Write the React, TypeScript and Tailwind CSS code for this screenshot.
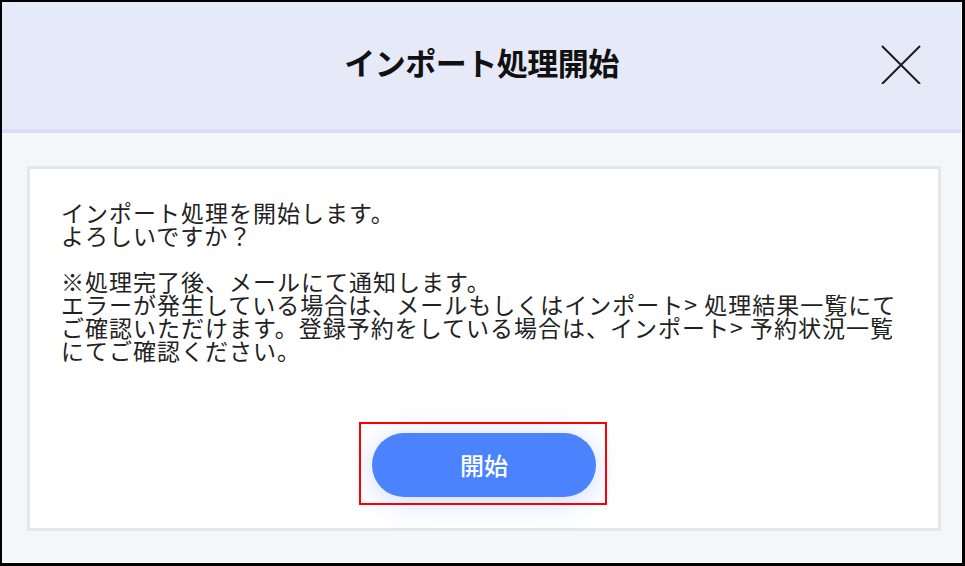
import React from "react";

export default function App() {
  const font = { fontFamily: '"Noto Sans CJK JP", "Noto Sans", sans-serif' };
  return (
    <div className="w-[965px] h-[566px] bg-black pt-[2px] pl-[2px] pr-[3px] pb-[3px]" style={font}>
      <div className="flex h-full w-full flex-col bg-[#f5f6fa] border-b border-r border-white">
        <header className="relative flex h-[131px] shrink-0 items-center justify-center border-b-[4px] border-[#d9ddf5] bg-[#e6e9f8] pb-[8px]">
          <h1 className="text-[31px] font-bold leading-none text-[#111] tracking-[-0.5px]">インポート処理開始</h1>
          <button className="absolute right-[40px] top-[42px] h-[40px] w-[40px] text-[#1c1c1c]" aria-label="close">
            <svg viewBox="0 0 40 40" className="h-[40px] w-[40px]">
              <path d="M1 2 L39 40 M39 2 L1 40" stroke="currentColor" strokeWidth="2" fill="none" />
            </svg>
          </button>
        </header>
        <main className="flex-1 pl-[25px] pr-[20px] pt-[33px] pb-[31px]">
          <div className="flex h-full flex-col border-[3px] border-[#e6e6e6] bg-white px-[31px] pt-[32px] pb-[31px]">
            <p className="whitespace-nowrap text-[23px] leading-[23px] tracking-[1px] text-[#222]">
              インポート処理を開始します。
              <br />
              よろしいですか？
              <br />
              <br />
              ※処理完了後、メールにて通知します。
              <br />
              エラーが発生している場合は、メールもしくはインポート&gt; 処理結果一覧にて
              <br />
              ご確認いただけます。登録予約をしている場合は、インポート&gt; 予約状況一覧
              <br />
              にてご確認ください。
            </p>
            <div className="mt-auto flex justify-center">
              <div className="relative">
                <button className="flex h-[64px] w-[224px] items-center justify-center rounded-full bg-[#4b83ff] text-[24px] font-medium text-white shadow-[0_4px_28px_rgba(75,131,255,0.28)]">
                  開始
                </button>
                <div className="pointer-events-none absolute left-[-13px] top-[-11px] h-[83px] w-[248px] border-2 border-[#ff0000]" />
              </div>
            </div>
          </div>
        </main>
      </div>
    </div>
  );
}
